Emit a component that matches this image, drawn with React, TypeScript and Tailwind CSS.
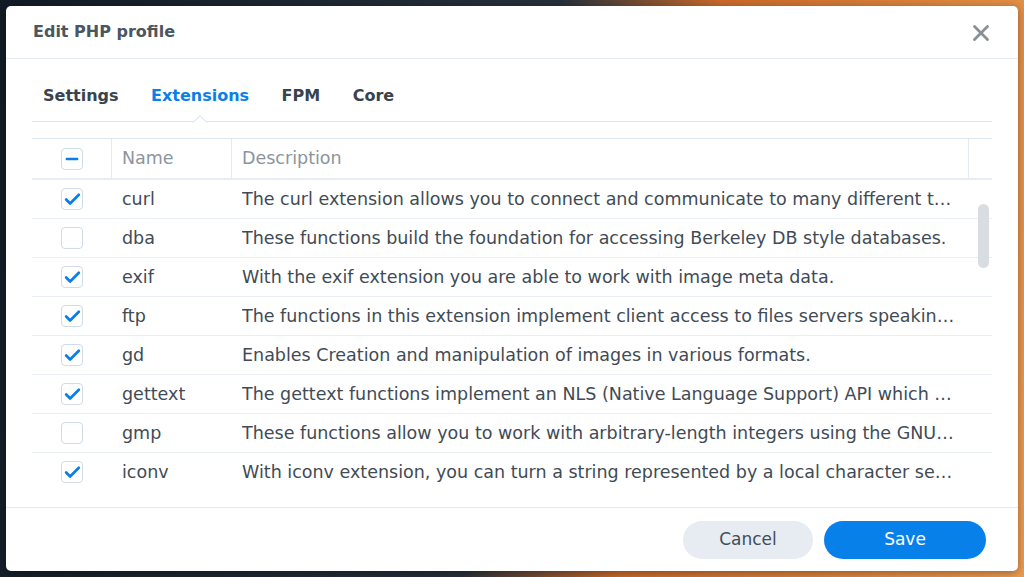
import { Check, Minus, X } from 'lucide-react';

const rows = [
  { name: 'curl', on: true, desc: 'The curl extension allows you to connect and communicate to many different types of servers with many different types of protocols.' },
  { name: 'dba', on: false, desc: 'These functions build the foundation for accessing Berkeley DB style databases.' },
  { name: 'exif', on: true, desc: 'With the exif extension you are able to work with image meta data.' },
  { name: 'ftp', on: true, desc: 'The functions in this extension implement client access to files servers speaking the File Transfer Protocol.' },
  { name: 'gd', on: true, desc: 'Enables Creation and manipulation of images in various formats.' },
  { name: 'gettext', on: true, desc: 'The gettext functions implement an NLS (Native Language Support) API which can be used to internationalize your PHP applications.' },
  { name: 'gmp', on: false, desc: 'These functions allow you to work with arbitrary-length integers using the GNU MP library.' },
  { name: 'iconv', on: true, desc: 'With iconv extension, you can turn a string represented by a local character set into the one represented by another character set.' },
  { name: 'imap', on: false, desc: 'These functions enable you to operate with the IMAP protocol, as well as the NNTP, POP3 and local mailbox access methods.' },
];

const tabs = ['Settings', 'Extensions', 'FPM', 'Core'];

function Box({ state }: { state: 'on' | 'off' | 'some' }) {
  return (
    <div className="w-[22px] h-[22px] rounded-[4px] border border-[#cfdbe7] bg-white flex items-center justify-center">
      {state === 'on' && <Check className="w-[19px] h-[19px] text-[#0a7ee8]" strokeWidth={3.4} />}
      {state === 'some' && <Minus className="w-[18px] h-[18px] text-[#0a7ee8]" strokeWidth={3.2} />}
    </div>
  );
}

export default function App() {
  return (
    <div
      className="w-[1024px] h-[577px] overflow-hidden pt-[6px] pl-[6px] bg-[linear-gradient(100deg,#121b25_0%,#26303b_50%,#c9692a_64%,#ea9b50_100%)]"
      style={{ fontFamily: '"DejaVu Sans", Verdana, sans-serif' }}
    >
      <div className="w-[1012px] h-[565px] bg-white rounded-[5px] shadow-[0_2px_8px_rgba(0,0,0,0.35)] flex flex-col">
        {/* header */}
        <div className="h-[53px] shrink-0 flex items-center justify-between pl-[27px] pr-[24px] border-b border-[#e3eaf1]">
          <h1 className="text-[16px] font-bold text-[#4b5660] leading-none">Edit PHP profile</h1>
          <X className="w-[26px] h-[26px] text-[#878f98] mt-[1px]" strokeWidth={2.6} />
        </div>

        {/* body */}
        <div className="flex-1 flex flex-col px-[26px] overflow-hidden">
          <div className="flex pl-[11px] gap-[32.5px] pt-[26px] pb-[14px] border-b border-[#dce6ef]">
            {tabs.map((t) => (
              <div
                key={t}
                className={`relative text-[16px] font-bold leading-[22px] ${t === 'Extensions' ? 'text-[#0a80e8]' : 'text-[#38434d]'}`}
              >
                {t}
                {t === 'Extensions' && (
                  <span className="absolute left-1/2 -bottom-[20px] -ml-[5px] w-[10px] h-[10px] rotate-45 bg-white border-l border-t border-[#dce6ef]" />
                )}
              </div>
            ))}
          </div>

          <div className="mt-[16px] border-t border-[#dce6ef] flex flex-col">
            <div className="h-[41px] flex border-b-2 border-[#e6edf4] text-[17.5px] text-[#8c959d]">
              <div className="w-[80px] flex items-center justify-center border-r border-[#e3eaf1]">
                <Box state="some" />
              </div>
              <div className="w-[120px] flex items-center pl-[10px] border-r border-[#e3eaf1]">Name</div>
              <div className="w-[737px] flex items-center pl-[10px] border-r border-[#e3eaf1]">Description</div>
              <div className="flex-1" />
            </div>

            <div className="relative h-[311px] overflow-hidden">
              {rows.map((r) => (
                <div key={r.name} className="h-[39px] flex border-b border-[#e8eef4] text-[17.5px] text-[#414b55]">
                  <div className="w-[80px] flex items-center justify-center">
                    <Box state={r.on ? 'on' : 'off'} />
                  </div>
                  <div className="w-[120px] flex items-center pl-[10px]">{r.name}</div>
                  <div className="w-[737px] flex items-center pl-[10px] pr-[14px] min-w-0">
                    <span className="truncate">{r.desc}</span>
                  </div>
                  <div className="flex-1" />
                </div>
              ))}
              <div className="absolute right-[3px] top-[24px] w-[11px] h-[64px] rounded-full bg-[#d9dde2]" />
            </div>
          </div>
        </div>

        {/* footer */}
        <div className="h-[64px] shrink-0 border-t border-[#e3eaf1] flex items-center justify-end gap-[11px] pr-[32px]">
          <button className="w-[130px] h-[38px] rounded-full bg-[#e7ecf3] text-[17px] text-[#434d57]">Cancel</button>
          <button className="w-[162px] h-[38px] rounded-full bg-[#0880ea] text-[17px] text-white">Save</button>
        </div>
      </div>
    </div>
  );
}
